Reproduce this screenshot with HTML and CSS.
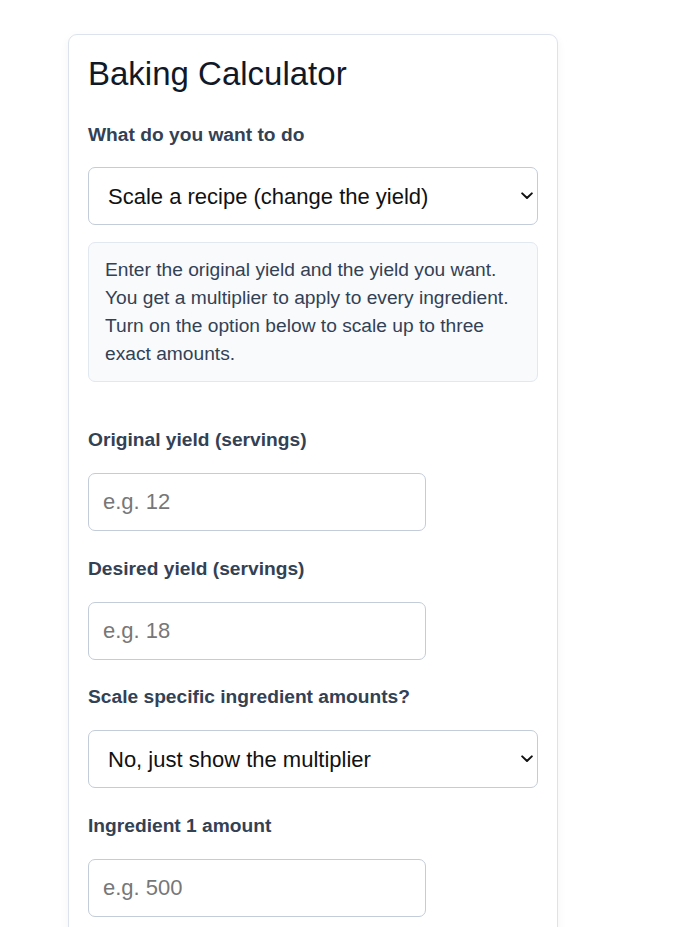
FILE: index.html
```html
<!DOCTYPE html>
<html lang="en">
<head>
<meta charset="utf-8">
<title>Baking Calculator</title>
<link rel="stylesheet" href="styles.css">
</head>
<body>
<main class="card">
  <h1 class="title">Baking Calculator</h1>
  <div class="field field-mode">
    <label class="label" for="mode">What do you want to do</label>
    <div class="select-wrap">
      <select id="mode" class="control select">
        <option>Scale a recipe (change the yield)</option>
        <option>Convert units</option>
      </select>
      <svg class="chevron" width="12" height="8" viewBox="0 0 12 8" aria-hidden="true"><path d="M1.2 1.4 L6 6 L10.8 1.4" fill="none" stroke="#111" stroke-width="2" stroke-linecap="round" stroke-linejoin="round"/></svg>
    </div>
  </div>
  <div class="info">Enter the original yield and the yield you want. You get a multiplier to apply to every ingredient. Turn on the option below to scale up to three exact amounts.</div>
  <div class="field">
    <label class="label" for="orig">Original yield (servings)</label>
    <input id="orig" class="control input" type="text" placeholder="e.g. 12">
  </div>
  <div class="field">
    <label class="label" for="want">Desired yield (servings)</label>
    <input id="want" class="control input" type="text" placeholder="e.g. 18">
  </div>
  <div class="field">
    <label class="label" for="specific">Scale specific ingredient amounts?</label>
    <div class="select-wrap">
      <select id="specific" class="control select">
        <option>No, just show the multiplier</option>
        <option>Yes, scale amounts</option>
      </select>
      <svg class="chevron" width="12" height="8" viewBox="0 0 12 8" aria-hidden="true"><path d="M1.2 1.4 L6 6 L10.8 1.4" fill="none" stroke="#111" stroke-width="2" stroke-linecap="round" stroke-linejoin="round"/></svg>
    </div>
  </div>
  <div class="field">
    <label class="label" for="ing1">Ingredient 1 amount</label>
    <input id="ing1" class="control input" type="text" placeholder="e.g. 500">
  </div>
</main>
</body>
</html>
```
FILE: styles.css
```css
* { box-sizing: border-box; }
html, body { margin: 0; padding: 0; background: #ffffff; }
body {
  font-family: "Liberation Sans", Arial, sans-serif;
  font-size: 19.2px;
  line-height: 28px;
  color: #334155;
  padding: 34px 0 0 68px;
}
.card {
  width: 490px;
  border: 1px solid #dde3ec;
  border-radius: 9px;
  padding: 19px 19px 40px;
  background: #fff;
  box-shadow: 0 3px 10px rgba(15, 23, 42, 0.05);
}
.title {
  margin: 0 0 28px;
  font-size: 33px;
  line-height: 39px;
  font-weight: 400;
  color: #111827;
}
.field {
  display: flex;
  flex-direction: column;
  gap: 19px;
  margin-bottom: 23.6px;
}
.field-mode { gap: 18px; margin-bottom: 17px; }
.label {
  font-weight: 700;
  color: #334155;
}
.control {
  height: 58px;
  border: 1px solid #c3ccd8;
  border-radius: 7px;
  background: #fff;
  font-family: "Liberation Sans", Arial, sans-serif;
  font-size: 22px;
  color: #111111;
  padding: 0 14px;
  margin: 0;
}
.input { width: 338px; }
.input::placeholder { color: #777777; }
.select-wrap { position: relative; width: 450px; }
.select {
  width: 450px;
  -webkit-appearance: none;
  appearance: none;
  padding: 0 40px 0 19px;
}
.chevron {
  position: absolute;
  right: 5px;
  top: 25px;
  pointer-events: none;
}
.info {
  background: #f8fafc;
  border: 1px solid #e2e8f0;
  border-radius: 7px;
  padding: 13px 16px;
  margin-bottom: 44px;
  color: #334155;
}
```
